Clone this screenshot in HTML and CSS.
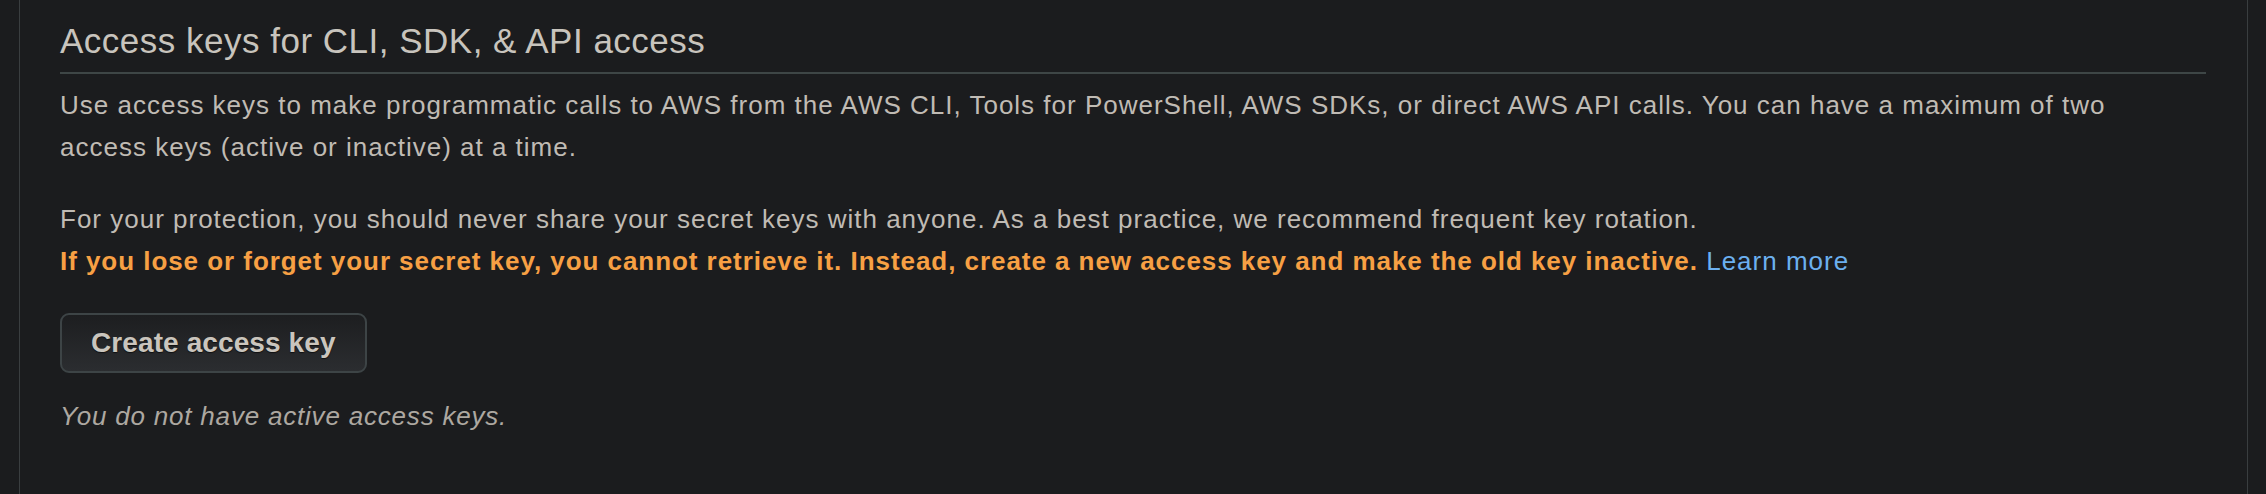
FILE: index.html
```html
<!DOCTYPE html>
<html lang="en">
<head>
<meta charset="utf-8">
<title>Access keys</title>
<link rel="stylesheet" href="styles.css">
</head>
<body>
<div class="panel">
  <section class="section">
    <h2 class="title">Access keys for CLI, SDK, &amp; API access</h2>
    <p class="desc">Use access keys to make programmatic calls to AWS from the AWS CLI, Tools for PowerShell, AWS SDKs, or direct AWS API calls. You can have a maximum of two<br>access keys (active or inactive) at a time.</p>
    <p class="desc">For your protection, you should never share your secret keys with anyone. As a best practice, we recommend frequent key rotation.<br><strong class="warn">If you lose or forget your secret key, you cannot retrieve it. Instead, create a new access key and make the old key inactive.</strong> <a class="link" href="#">Learn more</a></p>
    <div class="actions">
      <button class="btn" type="button">Create access key</button>
    </div>
    <p class="empty">You do not have active access keys.</p>
  </section>
</div>
</body>
</html>
```
FILE: styles.css
```css
html, body {
  margin: 0;
  padding: 0;
  height: 100%;
  background: #1b1c1e;
}

body {
  font-family: "Liberation Sans", Arial, Helvetica, sans-serif;
  color: #c0bbb4;
  overflow: hidden;
}

.panel {
  margin: 0 18px 0 19px;
  height: 100%;
  border-left: 1px solid #3a3e40;
  border-right: 1px solid #3a3e40;
  box-sizing: border-box;
}

.section {
  padding: 20px 41px 0 40px;
}

.title {
  margin: 0;
  font-size: 35px;
  line-height: 42px;
  font-weight: 400;
  letter-spacing: 0.5px;
  color: #c8c4bd;
  padding-bottom: 10px;
  border-bottom: 2px solid #3e4646;
}

.desc {
  margin: 10px 0 0;
  font-size: 26px;
  line-height: 42px;
  letter-spacing: 1px;
}

.desc + .desc {
  margin-top: 30px;
}

.warn {
  color: #f7a044;
  font-weight: 700;
  letter-spacing: 0.95px;
}

.link {
  color: #6cb0f0;
  text-decoration: none;
}

.actions {
  margin-top: 31px;
}

.btn {
  display: block;
  height: 60px;
  padding: 0 29px;
  border: 2px solid #3d4446;
  border-radius: 9px;
  background: linear-gradient(#1d1e20, #2b2d30);
  color: #cac5bd;
  font-family: inherit;
  font-size: 28px;
  font-weight: 700;
  letter-spacing: 0.1px;
  text-shadow: 0 1px 1px rgba(0, 0, 0, 0.6);
  cursor: pointer;
}

.empty {
  margin: 22px 0 0;
  font-size: 26px;
  line-height: 42px;
  letter-spacing: 0.8px;
  font-style: italic;
  color: #ada8a1;
}
```
